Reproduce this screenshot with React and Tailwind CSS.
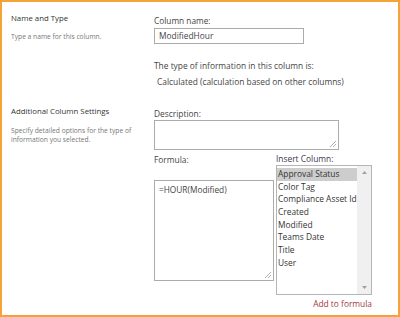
import React from "react";

function Grip() {
  return (
    <svg width="8" height="8" viewBox="0 0 8 8" className="absolute right-[1px] bottom-[1px]">
      <line x1="7" y1="1" x2="1" y2="7" stroke="#9a9a9a" strokeWidth="0.8" />
      <line x1="7" y1="4" x2="4" y2="7" stroke="#9a9a9a" strokeWidth="0.8" />
    </svg>
  );
}

export default function App() {
  const items = [
    "Approval Status",
    "Color Tag",
    "Compliance Asset Id",
    "Created",
    "Modified",
    "Teams Date",
    "Title",
    "User",
  ];
  return (
    <div
      className="w-[400px] h-[317px] border-2 border-[#f5a236] bg-white flex flex-col text-[#444]"
      style={{ fontFamily: '"Open Sans", "Noto Sans", sans-serif' }}
    >
      {/* Section 1 */}
      <div className="flex">
        <div className="w-[152px] pl-[9px]">
          <div className="mt-[9px] text-[7.8px] leading-[14px] text-[#333]">Name and Type</div>
          <div className="mt-[6px] text-[6.7px] leading-[12px] text-[#777]">Type a name for this column.</div>
        </div>
        <div className="flex flex-col">
          <div className="mt-[12px] text-[8.3px] leading-[14px]">Column name:</div>
          <div className="w-[150px] h-[16px] border border-[#ababab] flex items-center pl-[4px] text-[8.4px] text-[#444]">
            ModifiedHour
          </div>
          <div className="mt-[15px] text-[8.4px] leading-[14px]">The type of information in this column is:</div>
          <div className="mt-[2px] pl-[3px] text-[8.4px] leading-[14px]">
            Calculated (calculation based on other columns)
          </div>
        </div>
      </div>
      {/* Section 2 */}
      <div className="flex">
        <div className="w-[152px] pl-[9px]">
          <div className="mt-[15px] text-[7.8px] leading-[14px] text-[#333]">Additional Column Settings</div>
          <div className="mt-[8px] text-[6.7px] leading-[9px] text-[#777]">
            Specify detailed options for the type of
            <br />
            information you selected.
          </div>
        </div>
        <div className="flex flex-col">
          <div className="mt-[19px] text-[8.4px] leading-[12px]">Description:</div>
          <div className="relative w-[185px] h-[30px] border border-[#ababab]">
            <Grip />
          </div>
          <div className="flex gap-[2px]">
            <div className="flex flex-col">
              <div className="mt-[4px] text-[8.4px] leading-[12px]">Formula:</div>
              <div className="relative mt-[14px] w-[120px] h-[101px] border border-[#ababab] pl-[4px] pt-[3px] text-[8.3px] leading-[12px] text-[#444]">
                =HOUR(Modified)
                <Grip />
              </div>
            </div>
            <div className="flex flex-col">
              <div className="mt-[3px] text-[8.4px] leading-[12px] text-[#3f3450]">Insert Column:</div>
              <div className="w-[96px] h-[130px] border border-[#b5b5b5] flex">
                <div className="flex-1 flex flex-col pt-[2px]">
                  {items.map((it, i) => (
                    <div
                      key={it}
                      className={
                        "h-[12.7px] leading-[12.7px] pl-[1px] text-[8.4px] text-[#333] whitespace-nowrap " +
                        (i === 0 ? "bg-[#cdcdcd]" : "")
                      }
                    >
                      {it}
                    </div>
                  ))}
                </div>
                <div className="w-[14px] bg-[#f0f0f0] flex flex-col justify-between items-center py-[5px]">
                  <svg width="5" height="3" viewBox="0 0 5 3">
                    <polygon points="2.5,0 5,3 0,3" fill="#a0a0a0" />
                  </svg>
                  <svg width="5" height="3" viewBox="0 0 5 3">
                    <polygon points="0,0 5,0 2.5,3" fill="#a0a0a0" />
                  </svg>
                </div>
              </div>
              <div className="mt-[3px] text-right text-[8.4px] leading-[12px] text-[#a4373a]">Add to formula</div>
            </div>
          </div>
        </div>
      </div>
    </div>
  );
}
